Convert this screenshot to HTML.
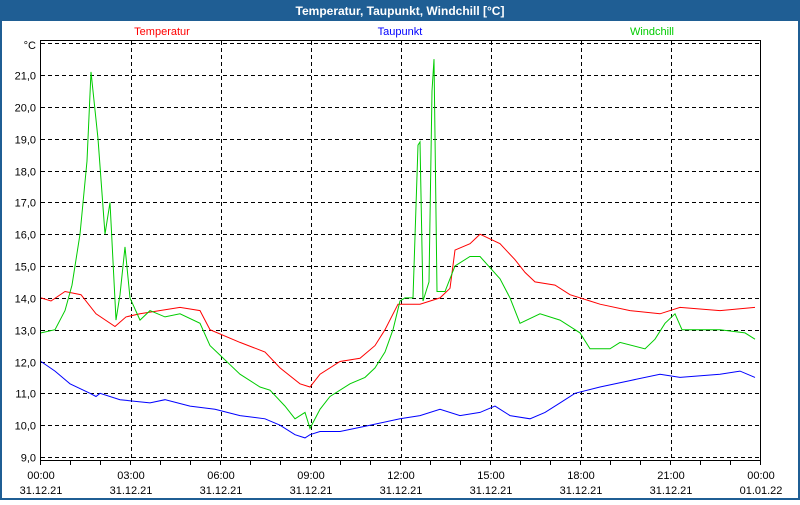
<!DOCTYPE html>
<html><head><meta charset="utf-8"><style>
body{margin:0;width:800px;height:500px;overflow:hidden;background:#fff;font-family:"Liberation Sans",sans-serif}
</style></head><body>
<svg id="s" width="800" height="500" xmlns="http://www.w3.org/2000/svg" font-family="Liberation Sans, sans-serif" font-size="11">
<rect x="0" y="0" width="800" height="500" fill="#1f5e94"/>
<rect x="2" y="21" width="796" height="477" fill="#fff"/>
<text x="400" y="15" fill="#fff" font-weight="bold" font-size="12" text-anchor="middle">Temperatur, Taupunkt, Windchill [°C]</text>
<text x="162" y="35" fill="#ff0000" text-anchor="middle">Temperatur</text>
<text x="400" y="35" fill="#0000ff" text-anchor="middle">Taupunkt</text>
<text x="652" y="35" fill="#00cc00" text-anchor="middle">Windchill</text>
<g id="grid" stroke="#000" stroke-width="1" stroke-dasharray="4,3" fill="none"></g>
<g id="lab" fill="#000"></g>
<g id="lines" fill="none" stroke-width="1"></g>
<rect x="40.5" y="40.5" width="720" height="420" fill="none" stroke="#000"/>
</svg>
<script>
var ns="http://www.w3.org/2000/svg";
function Y(v){return 457-(v-9)*31.83;}
function el(p,t,a,txt){var e=document.createElementNS(ns,t);for(var k in a)e.setAttribute(k,a[k]);if(txt)e.textContent=txt;p.appendChild(e);return e;}
var g=document.getElementById('grid'),l=document.getElementById('lab'),ln=document.getElementById('lines');
for(var v=9;v<=22;v++){var y=Math.round(Y(v))+0.5;el(g,'line',{x1:41,x2:760,y1:y,y2:y});
 if(v<22)el(l,'text',{x:36,y:y+4,'text-anchor':'end'},v+',0');}
el(l,'text',{x:36,y:49,'text-anchor':'end'},'°C');
var times=['00:00','03:00','06:00','09:00','12:00','15:00','18:00','21:00','00:00'];
for(var i=0;i<=8;i++){var x=41+i*90;if(i>0&&i<8){el(g,'line',{x1:x+0.5,x2:x+0.5,y1:41,y2:460});}
 el(l,'text',{x:x,y:479,'text-anchor':'middle'},times[i]);
 el(l,'text',{x:x,y:494,'text-anchor':'middle'},i==8?'01.01.22':'31.12.21');}
for(var h=0;h<=24;h++){var x=40.5+h*30;el(l,'line',{x1:x,x2:x,y1:461,y2:465,stroke:'#000'});}
function draw(d,c){var p=[];for(var i=0;i<d.length;i+=2)p.push((41+d[i])+','+Y(d[i+1]).toFixed(1));el(ln,'polyline',{points:p.join(' '),stroke:c});}
draw([0,12.0,14,11.7,29,11.3,49,11.0,55,10.9,59,11.0,79,10.8,109,10.7,124,10.8,149,10.6,174,10.5,199,10.3,224,10.2,239,10.0,254,9.7,264,9.6,269,9.7,279,9.8,299,9.8,329,10.0,359,10.2,379,10.3,399,10.5,419,10.3,439,10.4,454,10.6,469,10.3,489,10.2,504,10.4,519,10.7,534,11.0,559,11.2,589,11.4,619,11.6,639,11.5,679,11.6,699,11.7,714,11.5],'#0000ff');
draw([0,14.0,10,13.9,24,14.2,40,14.1,55,13.5,74,13.1,85,13.4,99,13.5,139,13.7,159,13.6,169,13.0,199,12.6,224,12.3,239,11.8,259,11.3,269,11.2,279,11.6,299,12.0,319,12.1,334,12.5,344,13.0,357,13.8,379,13.8,399,14.0,409,14.3,414,15.5,429,15.7,439,16.0,459,15.7,474,15.2,484,14.8,494,14.5,514,14.4,529,14.1,549,13.9,559,13.8,589,13.6,619,13.5,639,13.7,679,13.6,714,13.7],'#ff0000');
draw([0,12.9,14,13.0,24,13.6,31,14.4,39,16.0,46,18.3,50,21.1,57,19.0,64,16.0,69,17.0,75,13.3,79,14.1,84,15.6,89,14.0,99,13.3,109,13.6,124,13.4,139,13.5,159,13.2,169,12.5,179,12.2,189,11.9,199,11.6,219,11.2,229,11.1,244,10.6,254,10.2,264,10.4,269,9.9,279,10.5,289,10.9,309,11.3,324,11.5,334,11.8,344,12.3,352,13.0,359,13.9,364,14.0,372,14.0,377,18.8,379,18.9,382,13.9,388,14.5,391,20.5,393,21.5,396,14.2,404,14.2,414,15.0,429,15.3,439,15.3,459,14.6,469,14.0,479,13.2,499,13.5,519,13.3,534,13.0,539,12.9,549,12.4,569,12.4,579,12.6,604,12.4,614,12.7,624,13.2,634,13.5,641,13.0,679,13.0,704,12.9,714,12.7],'#00cc00');
</script>
</body></html>
